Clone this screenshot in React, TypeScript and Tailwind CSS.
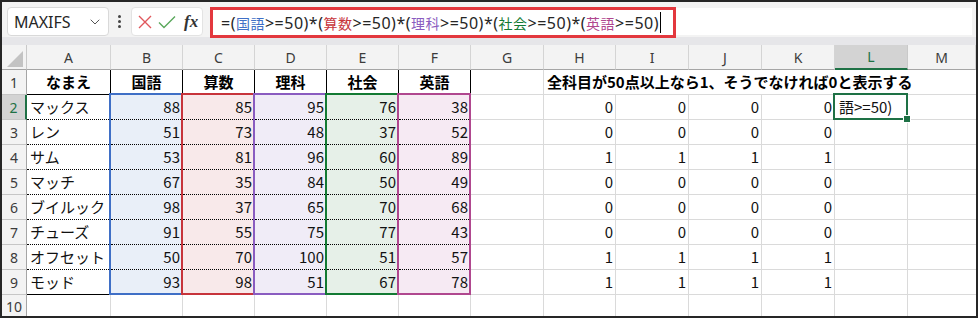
import React from 'react';
import { ChevronDown } from 'lucide-react';

const names = ['マックス', 'レン', 'サム', 'マッチ', 'ブイルック', 'チューズ', 'オフセット', 'モッド'];
const scores = [
  [88, 85, 95, 76, 38],
  [51, 73, 48, 37, 52],
  [53, 81, 96, 60, 89],
  [67, 35, 84, 50, 49],
  [98, 37, 65, 70, 68],
  [91, 55, 75, 77, 43],
  [50, 70, 100, 51, 57],
  [93, 98, 51, 67, 78],
];
const subjects = ['国語', '算数', '理科', '社会', '英語'];
const colLetters = ['A', 'B', 'C', 'D', 'E', 'F', 'G', 'H', 'I', 'J', 'K', 'L', 'M'];

const fillCls = ['bg-[#e9eff8]', 'bg-[#f8e9ea]', 'bg-[#f0ecf7]', 'bg-[#e6f0e8]', 'bg-[#f6eaf3]'];
const rangeCls = [
  'left-[107px] border-[#3f6fc6]',
  'left-[179px] border-[#c7343b]',
  'left-[251px] border-[#8a5cc0]',
  'left-[323px] border-[#137a33]',
  'left-[395px] border-[#b0478f]',
];

const CJK = "[font-family:'Noto_Sans_CJK_JP',sans-serif]";
const UI = "[font-family:'Noto_Sans','Noto_Sans_CJK_JP',sans-serif]";

const GRID_R = 'border-r border-r-[#dadada]';
const GRID_B = 'border-b border-b-[#dadada]';

function RowHeader({ n, selected }: { n: number; selected?: boolean }) {
  if (selected) {
    return (
      <div className={`flex items-center justify-center border-b border-b-[#c6c6c6] border-r-2 border-r-[#1e7145] bg-[#d3d3d3] text-[14px] text-[#1e7145] ${UI}`}>
        {n}
      </div>
    );
  }
  return (
    <div className={`flex items-center justify-center border-b border-b-[#c6c6c6] border-r border-r-[#a5a5a5] bg-[#f3f3f3] text-[14px] text-[#3b3b3b] ${UI}`}>
      {n}
    </div>
  );
}

function allOk(r: number[]) {
  return r.every((v) => v >= 50) ? 1 : 0;
}

export default function App() {
  return (
    <div className={`h-[318px] w-[978px] overflow-hidden border-2 border-[#262626] bg-white ${UI}`}>
      {/* Formula bar */}
      <div className="flex h-[35px] items-start bg-[#f3f3f3]">
        <div className="ml-[5px] mt-[5px] flex h-[29px] w-[102px] items-center justify-between rounded-[4px] border border-[#d9d9d9] bg-white pl-[6px] pr-[5px]">
          <span className="text-[16px] text-[#262626]">MAXIFS</span>
          <ChevronDown size={16} strokeWidth={1.5} color="#555" />
        </div>
        <div className="ml-[8px] mt-[5px] flex h-[29px] w-[4px] flex-col items-center justify-center gap-[2px]">
          <span className="h-[3px] w-[3px] rounded-full bg-[#444]" />
          <span className="h-[3px] w-[3px] rounded-full bg-[#444]" />
          <span className="h-[3px] w-[3px] rounded-full bg-[#444]" />
        </div>
        <div className="ml-[10px] mt-[5px] flex h-[29px] w-[72px] items-center rounded-[4px] border border-[#e3e3e3] bg-white pl-[5px]">
          <svg width="14" height="14" viewBox="0 0 14 14" className="ml-[1px]">
            <path d="M1 1 L13 13 M13 1 L1 13" stroke="#e0575c" strokeWidth="1.4" fill="none" />
          </svg>
          <svg width="18" height="14" viewBox="0 0 18 14" className="ml-[6px]">
            <path d="M1 7.5 L6 12.5 L17 1.5" stroke="#5aa85c" strokeWidth="1.4" fill="none" />
          </svg>
          <span className="ml-[8px] text-[17px] font-bold italic leading-none text-[#333] [font-family:'Liberation_Serif',serif]">fx</span>
        </div>
        <div className="ml-[7px] mr-[4px] mt-[6px] flex h-[27px] flex-1 bg-white">
          <div className="-mt-[1px] flex h-[31px] w-[466px] items-center border-[3px] border-[#e3383e] pl-[8px]">
            <span className="whitespace-nowrap text-[16px] tracking-[0.5px] text-[#262626]">
              <span>=(</span>
              <span className={`text-[14px] text-[#3f6fc6] ${CJK}`}>国語</span>
              <span>&gt;=50)*(</span>
              <span className={`text-[14px] text-[#c7343b] ${CJK}`}>算数</span>
              <span>&gt;=50)*(</span>
              <span className={`text-[14px] text-[#8a5cc0] ${CJK}`}>理科</span>
              <span>&gt;=50)*(</span>
              <span className={`text-[14px] text-[#137a33] ${CJK}`}>社会</span>
              <span>&gt;=50)*(</span>
              <span className={`text-[14px] text-[#b0478f] ${CJK}`}>英語</span>
              <span>&gt;=50)</span>
            </span>
            <span className="ml-[1px] h-[21px] w-[1px] bg-black" />
          </div>
        </div>
      </div>
      <div className="h-[8px] bg-[#e6e6e9]" />

      {/* Sheet grid */}
      <div className="relative grid grid-cols-[25px_84px_72px_72px_72px_72px_72px_73px_72px_73px_73px_73px_73px_68px] grid-rows-[25px_repeat(9,25px)_21px]">
        {/* column headers */}
        <div className="flex items-end justify-end border-b border-r border-b-[#a5a5a5] border-r-[#c9c9c9] bg-[#f3f3f3] pb-[2px] pr-[3px]">
          <svg width="16" height="16" viewBox="0 0 16 16">
            <polygon points="16,0 16,16 0,16" fill="#c3c3c3" />
          </svg>
        </div>
        {colLetters.map((c) =>
          c === 'L' ? (
            <div key={c} className="flex items-center justify-center border-b-2 border-r border-b-[#1e7145] border-r-[#c9c9c9] bg-[#d3d3d3] text-[14px] text-[#1e7145]">
              {c}
            </div>
          ) : (
            <div key={c} className="flex items-center justify-center border-b border-r border-b-[#a5a5a5] border-r-[#d4d4d4] bg-[#f3f3f3] text-[14px] text-[#3b3b3b]">
              {c}
            </div>
          )
        )}

        {/* row 1 */}
        <RowHeader n={1} />
        <div className={`flex items-center justify-center border-b border-r border-black text-[15px] font-bold text-black ${CJK}`}>なまえ</div>
        {subjects.map((s) => (
          <div key={s} className={`flex items-center justify-center border-b border-r border-black text-[15px] font-bold text-black ${CJK}`}>
            {s}
          </div>
        ))}
        <div className={`${GRID_R} ${GRID_B}`} />
        <div className={`flex items-center overflow-visible whitespace-nowrap pl-[3px] text-[15px] font-bold text-black ${GRID_B} ${CJK}`}>
          全科目が50点以上なら1、そうでなければ0と表示する
        </div>
        <div className={GRID_B} />
        <div className={GRID_B} />
        <div className={GRID_B} />
        <div className={GRID_B} />
        <div className={GRID_B} />

        {/* data rows */}
        {names.map((name, r) => {
          const last = r === names.length - 1;
          const v = allOk(scores[r]);
          return (
            <React.Fragment key={name}>
              <RowHeader n={r + 2} selected={r === 0} />
              <div
                className={`flex items-center pl-[3px] text-[15px] text-[#111] ${GRID_R} ${
                  last ? 'border-b border-b-black' : 'border-b border-b-black [border-bottom-style:dotted]'
                } ${CJK}`}
              >
                {name}
              </div>
              {scores[r].map((s, i) => (
                <div
                  key={i}
                  className={`flex items-center justify-end pr-[2px] text-[15px] text-[#111] ${fillCls[i]} ${GRID_R} ${
                    last ? '' : 'border-b border-b-black [border-bottom-style:dotted]'
                  } ${CJK}`}
                >
                  {s}
                </div>
              ))}
              <div className={`${GRID_R} ${GRID_B}`} />
              {[0, 1, 2, 3].map((k) => (
                <div key={k} className={`flex items-center justify-end pr-[2px] text-[15px] text-[#111] ${GRID_R} ${GRID_B} ${CJK}`}>
                  {v}
                </div>
              ))}
              <div className={`flex items-center pl-[4px] text-[15px] text-[#111] ${GRID_R} ${GRID_B} ${CJK}`}>
                {r === 0 ? '語>=50)' : ''}
              </div>
              <div className={GRID_B} />
            </React.Fragment>
          );
        })}

        {/* row 10 */}
        <div className={`flex items-start justify-center border-r border-r-[#a5a5a5] bg-[#f3f3f3] pt-[1px] text-[14px] text-[#3b3b3b]`}>10</div>
        {colLetters.map((c) => (
          <div key={c} className={c === 'M' ? '' : GRID_R} />
        ))}

        {/* reference range highlights */}
        {rangeCls.map((cls, i) => (
          <div key={i} className={`pointer-events-none absolute top-[48px] h-[202px] w-[74px] border-2 ${cls}`} />
        ))}

        {/* active cell L2 */}
        <div className="pointer-events-none absolute left-[831px] top-[48px] h-[27px] w-[75px] border-2 border-[#1e7145]" />
        <div className="pointer-events-none absolute left-[901px] top-[70px] h-[8px] w-[8px] border border-white bg-[#1e7145]" />
      </div>
    </div>
  );
}
